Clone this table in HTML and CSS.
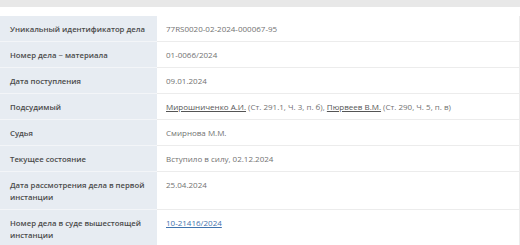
FILE: index.html
```html
<!DOCTYPE html>
<html lang="ru">
<head>
<meta charset="utf-8">
<link rel="stylesheet" href="styles.css">
</head>
<body>
<div class="topbar"></div>
<table class="info">
  <tr><th>Уникальный идентификатор дела</th><td>77RS0020-02-2024-000067-95</td></tr>
  <tr><th>Номер дела ~ материала</th><td>01-0066/2024</td></tr>
  <tr><th>Дата поступления</th><td>09.01.2024</td></tr>
  <tr><th>Подсудимый</th><td><a class="person" href="#">Мирошниченко А.И.</a> (Ст. 291.1, Ч. 3, п. б), <a class="person" href="#">Пюрвеев В.М.</a> (Ст. 290, Ч. 5, п. в)</td></tr>
  <tr><th>Судья</th><td>Смирнова М.М.</td></tr>
  <tr><th>Текущее состояние</th><td>Вступило в силу, 02.12.2024</td></tr>
  <tr><th>Дата рассмотрения дела в первой инстанции</th><td>25.04.2024</td></tr>
  <tr><th>Номер дела в суде вышестоящей инстанции</th><td><a class="case" href="#">10-21416/2024</a></td></tr>
</table>
</body>
</html>
```
FILE: styles.css
```css
html, body {
  margin: 0;
  padding: 0;
  background: #fff;
}
body {
  font-family: "Open Sans", "DejaVu Sans", sans-serif;
  font-size: 8px;
}
.topbar {
  height: 7px;
  background: #e8e8e8;
  margin-bottom: 9px;
}
.info {
  width: 520px;
  border-collapse: collapse;
  border-right: 1px solid #ececec;
  table-layout: fixed;
}
.info th, .info td {
  text-align: left;
  vertical-align: top;
  line-height: 12px;
  padding: 7px 0 6px 10px;
  border-bottom: 1px solid #ececec;
}
.info th {
  width: 147px;
  background: #e7ecf2;
  color: #4a4a4a;
  font-weight: 600;
  font-size: 7.75px;
  border-bottom-color: #f3f5f8;
}
.info td {
  color: #727272;
  font-weight: 400;
  padding-left: 9px;
}
.person {
  color: #555;
  text-decoration: underline;
}
.case {
  color: #3f73ad;
  text-decoration: underline;
}
```
